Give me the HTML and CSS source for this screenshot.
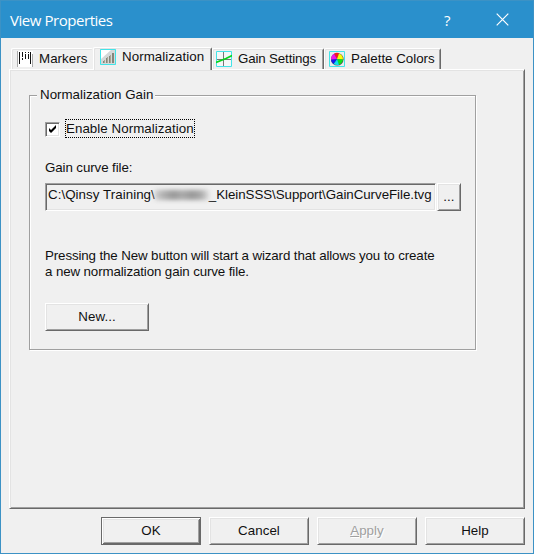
FILE: index.html
```
<!DOCTYPE html>
<html lang="en">
<head>
<meta charset="utf-8">
<title>View Properties</title>
<link rel="stylesheet" href="styles.css">
</head>
<body>
<div class="window">
  <header class="titlebar">
    <span class="title">View Properties</span>
    <span class="help">?</span>
    <svg class="close" width="13" height="13" viewBox="0 0 13 13"><path d="M.7.7l11.6 11.6M12.3.7L.7 12.3" stroke="#fff" stroke-width="1.2" fill="none"/></svg>
  </header>
  <nav class="tabs">
    <div class="tab markers">
      <svg width="16" height="16" viewBox="0 0 16 16"><path fill="#fff" d="M0 0h16v16H0z"/><path fill="#aaa" d="M0 0h1v16H0zM15 3h1v13h-1z"/><path fill="#111" d="M2 1h1v12H2zM5 1h1v5H5zM5 7h1v2H5zM8 1h1v1H8zM8 3h1v5H8zM11 1h1v1h-1zM11 3h1v5h-1zM13 1h1v12h-1z"/></svg>
      <span>Markers</span>
    </div>
    <div class="tab normal active">
      <svg width="16" height="16" viewBox="0 0 16 16"><path fill="#d4d8d8" d="M0 0h16v16H0z"/><path fill="#fff" d="M1 1h10L1 10z"/><path fill="#85857a" d="M3 12h1v2H3zM6 9h1v5H6zM9 7h1v7H9zM12 4h2v10h-2z"/><path fill="#aaa794" d="M4 11h1v3H4zM7 8h1v6H7zM10 6h1v8h-1z"/><path fill="none" stroke="#42e4e8" d="M.5.5h15v15H.5z"/></svg>
      <span>Normalization</span>
    </div>
    <div class="tab gain">
      <svg width="16" height="16" viewBox="0 0 16 16"><path fill="#f5f8f8" stroke="#42e4e8" d="M.5.5h15v15H.5z"/><path fill="none" stroke="#777" d="M7.5 1v14M1 8.500h14"/><path fill="none" stroke="#08d41b" stroke-width="1.7" d="M0 11.500l5-2 5-2 6-3"/></svg>
      <span>Gain Settings</span>
    </div>
    <div class="tab palette">
      <svg width="16" height="16" viewBox="0 0 16 16"><path fill="#e8eeee" stroke="#42e4e8" d="M.5.5h15v15H.5z"/><circle cx="8.300" cy="8.300" r="6.300" fill="#555"/><path fill="#f21b20" d="M8 8L5 2.700Q8 1 10 2.400z"/><path fill="#ff0" d="M8 8l2-5.600Q14 4 14 8.500z"/><path fill="#0ce51c" d="M8 8l6 .5Q13.500 12 10 13.800z"/><path fill="#10dfee" d="M8 8l2 5.800Q7 14.500 4.500 13z"/><path fill="#1717ed" d="M8 8l-3.500 5Q2 11 2 8.500z"/><path fill="#f016e8" d="M8 8l-6 .5Q2 4.500 5 2.700z"/></svg>
      <span>Palette Colors</span>
    </div>
  </nav>
  <main class="panel">
    <section class="group">
      <h2 class="legend"><span>Normalization Gain</span></h2>
      <div class="check-row">
        <span class="checkbox"><svg width="9" height="9" viewBox="0 0 9 9"><path d="M1 3v3l2 2 5-5V0L3 5z" fill="#000"/></svg></span>
        <span class="check-label"><span>Enable Normalization</span></span>
      </div>
      <div class="file-label"><span>Gain curve file:</span></div>
      <div class="file-row">
        <div class="field"><span class="path-a">C:\Qinsy Training\</span><span class="redacted"></span><span class="path-b">_KleinSSS\Support\GainCurveFile.tvg</span></div>
        <div class="btn browse">...</div>
      </div>
      <p class="hint">Pressing the New button will start a wizard that allows you to create<br>a new normalization gain curve file.</p>
      <div class="btn new">New...</div>
    </section>
  </main>
  <footer class="actions">
    <div class="btn default"><span>OK</span></div>
    <div class="btn">Cancel</div>
    <div class="btn disabled"><span><u>A</u>pply</span></div>
    <div class="btn">Help</div>
  </footer>
</div>
</body>
</html>
```
FILE: styles.css
```
* { box-sizing: border-box; }
body {
  margin: 0;
  font: 13.33px/16px "Liberation Sans", Arial, sans-serif;
  letter-spacing: .05px;
  color: #101010;
  background: #f0f0f0;
}
svg { display: block; flex: none; }
span { white-space: nowrap; }
.window {
  width: 534px;
  height: 554px;
  border: 1px solid #3c92c5;
  background: #f0f0f0;
}
.titlebar {
  display: flex;
  align-items: center;
  height: 37px;
  padding: 0 24px 0 9px;
  background: #2a90cc;
  color: #fff;
  font: 15px/20px "Open Sans", "Noto Sans", sans-serif;
  letter-spacing: -.45px;
}
.title { flex: 1; }
.help { margin-right: 46px; }
.tabs {
  display: flex;
  align-items: flex-end;
  height: 31px;
  padding-left: 10px;
}
.tab {
  display: flex;
  align-items: center;
  gap: 6px;
  height: 21px;
  padding-left: 5px;
  border: solid #fff;
  border-width: 1px 0 0 1px;
  border-radius: 2px 2px 0 0;
  box-shadow: inset 1px 1px #e3e3e3;
}
.markers { width: 82px; }
.normal { width: 119px; padding-left: 6px; }
.gain { width: 112px; padding-left: 3px; letter-spacing: -.15px; }
.palette { width: 117px; padding-left: 4px; letter-spacing: 0; }
.gain, .palette, .active { border-right: 1px solid #696969; box-shadow: inset 1px 1px #e3e3e3, inset -1px 0 #a0a0a0; }
.active { height: 23px; background: #f0f0f0; position: relative; z-index: 1; margin-bottom: -1px; padding-bottom: 4px; }
.panel {
  width: 516px;
  height: 440px;
  margin-left: 8px;
  padding: 25px 0 0 19px;
  border: solid;
  border-width: 1px;
  border-color: #fff #696969 #696969 #fff;
  box-shadow: inset 1px 1px #e3e3e3, inset -1px -1px #a0a0a0;
}
.group {
  width: 447px;
  height: 255px;
  padding: 0 14px 0 15px;
  border: 1px solid #a0a0a0;
  box-shadow: inset 1px 1px #fff, 1px 1px #fff;
}
.legend {
  display: table;
  margin: -9px 0 0 -8px;
  padding: 0 2px 0 3px;
  font: inherit;
  letter-spacing: 0;
  background: #f0f0f0;
}
.check-row { display: flex; align-items: center; gap: 5px; height: 19px; margin-top: 16px; }
.checkbox {
  display: grid;
  place-items: center;
  width: 15px;
  height: 15px;
  margin-top: 1px;
  background: #fff;
  border: 1px solid;
  border-color: #a0a0a0 #fff #fff #a0a0a0;
  box-shadow: inset 1px 1px #696969, inset -1px -1px #e3e3e3;
}
.check-label { width: 130px; height: 19px; padding-left: 0; line-height: 17px; border: 1px dotted #000; }
.file-label { height: 16px; margin-top: 22px; letter-spacing: -.1px; }
.file-row { display: flex; gap: 1px; margin-top: 7px; }
.field {
  display: flex;
  width: 391px;
  height: 28px;
  padding: 3px 0 0 2px;
  border: 1px solid;
  border-color: #a0a0a0 #fff #fff #a0a0a0;
  box-shadow: inset 1px 1px #696969, inset -1px -1px #e3e3e3;
}
.path-b { letter-spacing: -.05px; }
.redacted { width: 54px; height: 10px; margin: 3px 0; background: linear-gradient(90deg, #ccc, #aaa 20%, #999 35%, #aaa 50%, #999 70%, #aaa 85%, #ddd); filter: blur(2px); }
.btn {
  display: grid;
  place-items: center;
  width: 100px;
  height: 28px;
  padding-bottom: 1px;
  border: 1px solid;
  border-color: #fff #696969 #696969 #fff;
  box-shadow: inset 1px 1px #e3e3e3, inset -1px -1px #a0a0a0;
}
.browse { width: 24px; }
.hint { margin: 37px 0 0; letter-spacing: -.12px; white-space: nowrap; }
.new { width: 104px; margin-top: 23px; }
.actions { display: flex; gap: 8px; margin: 8px 0 0 100px; }
.default { border-color: #696969; box-shadow: inset 1px 1px #fff, inset -1px -1px #696969, inset 2px 2px #e3e3e3, inset -2px -2px #a0a0a0; }
.disabled { color: #a0a0a0; text-shadow: 1px 1px #fff; }
```
